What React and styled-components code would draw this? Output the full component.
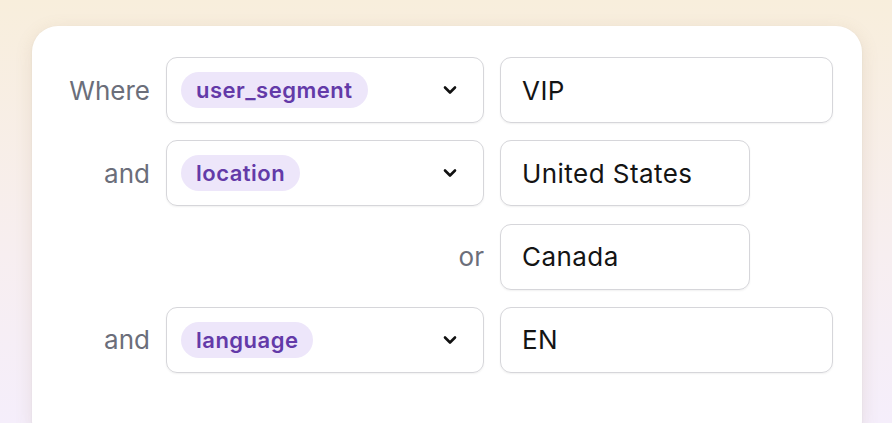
import styled, { createGlobalStyle } from 'styled-components';

const GlobalStyle = createGlobalStyle`
  html, body {
    margin: 0;
    padding: 0;
    height: 100%;
  }
  body {
    font-family: Inter, "Noto Sans", sans-serif;
    background: linear-gradient(180deg, #f8eedc 0%, #f7eef0 60%, #f5eefb 100%);
    overflow: hidden;
  }
`;

const Page = styled.div`
  height: 423px;
  padding: 26px 30px 0 32px;
  box-sizing: border-box;
  overflow: hidden;
`;

const Card = styled.div`
  width: 830px;
  height: 420px;
  background: #fff;
  border-radius: 26px;
  box-shadow: 0 4px 18px rgba(150, 120, 80, 0.14), 0 1px 3px rgba(0, 0, 0, 0.05);
  padding-top: 31px;
  box-sizing: border-box;
`;

const Grid = styled.div`
  display: grid;
  grid-template-columns: 118px 318px 333px;
  column-gap: 16px;
  row-gap: 17.3px;
`;

const Label = styled.div`
  display: flex;
  align-items: center;
  justify-content: flex-end;
  font-size: 26px;
  color: #6b6e7a;
  grid-column: ${(p) => (p.$wide ? '1 / 3' : 'auto')};
`;

const Select = styled.div`
  height: 66px;
  box-sizing: border-box;
  border: 1.5px solid #d6d6da;
  border-radius: 11px;
  box-shadow: 0 1px 2px rgba(0, 0, 0, 0.06);
  display: flex;
  align-items: center;
  justify-content: space-between;
  padding: 0 26px 0 14px;
`;

const Pill = styled.span`
  height: 36px;
  border-radius: 18px;
  background: #ede6fa;
  color: #633aa8;
  font-weight: 600;
  font-size: 22px;
  letter-spacing: 0.5px;
  display: flex;
  align-items: center;
  padding: 0 15px;
`;

const Input = styled.div`
  height: 66px;
  width: ${(p) => p.$w}px;
  box-sizing: border-box;
  border: 1.5px solid #d6d6da;
  border-radius: 11px;
  box-shadow: 0 1px 2px rgba(0, 0, 0, 0.06);
  display: flex;
  align-items: center;
  padding-left: 21px;
  font-size: 26px;
  letter-spacing: 0.45px;
  color: #141414;
`;

const Chevron = () => (
  <svg width="14" height="10" viewBox="0 0 14 10">
    <path d="M2 2.5 L7 7.5 L12 2.5" fill="none" stroke="#111" strokeWidth="2.6" strokeLinecap="round" strokeLinejoin="round" />
  </svg>
);

const rows = [
  { label: 'Where', field: 'user_segment', value: 'VIP', w: 333 },
  { label: 'and', field: 'location', value: 'United States', w: 250 },
  { label: 'or', value: 'Canada', w: 250 },
  { label: 'and', field: 'language', value: 'EN', w: 333 },
];

export default function App() {
  return (
    <>
      <GlobalStyle />
      <Page>
        <Card>
          <Grid>
            {rows.map((r, i) => (
              <Row key={i} {...r} />
            ))}
          </Grid>
        </Card>
      </Page>
    </>
  );
}

const Row = ({ label, field, value, w }) => (
  <>
    <Label $wide={!field}>{label}</Label>
    {field && (
      <Select>
        <Pill>{field}</Pill>
        <Chevron />
      </Select>
    )}
    <Input $w={w}>{value}</Input>
  </>
);
